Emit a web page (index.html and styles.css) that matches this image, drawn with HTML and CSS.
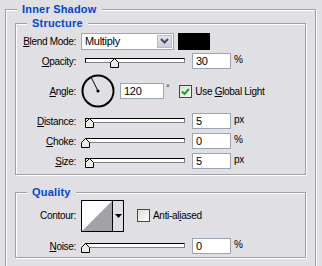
FILE: index.html
```html
<!DOCTYPE html>
<html lang="en">
<head>
    <meta charset="UTF-8">
    <title>Inner Shadow</title>
    <link rel="stylesheet" href="styles.css">
</head>
<body>
    <div class="group outer">
        <span class="group-title">Inner Shadow</span>

        <div class="group structure">
            <span class="group-title">Structure</span>

            <div class="row">
                <span class="label"><u>B</u>lend Mode:</span>
                <div class="select">
                    <span class="select-value">Multiply</span>
                    <span class="select-btn">
                        <svg width="11" height="8" viewBox="0 0 11 8"><path d="M2 2 L5.5 5.5 L9 2" fill="none" stroke="#3c4a6b" stroke-width="2"/></svg>
                    </span>
                </div>
                <div class="swatch"></div>
            </div>

            <div class="row">
                <span class="label"><u>O</u>pacity:</span>
                <div class="slider">
                    <div class="track"></div>
                    <svg class="thumb" style="left: 29px" width="9" height="10" viewBox="0 0 9 10"><path d="M4.5 0.5 L8.5 4.5 L8.5 9.5 L0.5 9.5 L0.5 4.5 Z" fill="#ecebe6" stroke="#000"/></svg>
                </div>
                <div class="field">30</div>
                <span class="unit">%</span>
            </div>

            <div class="row angle-row">
                <span class="label"><u>A</u>ngle:</span>
                <svg class="dial" width="34" height="34" viewBox="0 0 34 34">
                    <circle cx="17" cy="17" r="15.5" fill="none" stroke="#000" stroke-width="2"/>
                    <line x1="17" y1="17" x2="10.5" y2="4" stroke="#000" stroke-width="1"/>
                    <circle cx="17" cy="17" r="1.6" fill="#000"/>
                </svg>
                <div class="field field-wide">120</div>
                <span class="unit degree">°</span>
                <label class="check">
                    <span class="box">
                        <svg width="11" height="11" viewBox="0 0 11 11"><path d="M2 5.5 L4.5 8 L9 3" fill="none" stroke="#21a121" stroke-width="2"/></svg>
                    </span>
                    <span>Use <u>G</u>lobal Light</span>
                </label>
            </div>

            <div class="row">
                <span class="label"><u>D</u>istance:</span>
                <div class="slider">
                    <div class="track"></div>
                    <svg class="thumb" style="left: 4px" width="9" height="10" viewBox="0 0 9 10"><path d="M4.5 0.5 L8.5 4.5 L8.5 9.5 L0.5 9.5 L0.5 4.5 Z" fill="#ecebe6" stroke="#000"/></svg>
                </div>
                <div class="field">5</div>
                <span class="unit">px</span>
            </div>

            <div class="row">
                <span class="label"><u>C</u>hoke:</span>
                <div class="slider">
                    <div class="track"></div>
                    <svg class="thumb" style="left: 0px" width="9" height="10" viewBox="0 0 9 10"><path d="M4.5 0.5 L8.5 4.5 L8.5 9.5 L0.5 9.5 L0.5 4.5 Z" fill="#ecebe6" stroke="#000"/></svg>
                </div>
                <div class="field">0</div>
                <span class="unit">%</span>
            </div>

            <div class="row">
                <span class="label"><u>S</u>ize:</span>
                <div class="slider">
                    <div class="track"></div>
                    <svg class="thumb" style="left: 4px" width="9" height="10" viewBox="0 0 9 10"><path d="M4.5 0.5 L8.5 4.5 L8.5 9.5 L0.5 9.5 L0.5 4.5 Z" fill="#ecebe6" stroke="#000"/></svg>
                </div>
                <div class="field">5</div>
                <span class="unit">px</span>
            </div>
        </div>

        <div class="group quality">
            <span class="group-title">Quality</span>

            <div class="row contour-row">
                <span class="label">Contour:</span>
                <div class="contour">
                    <svg width="30" height="30" viewBox="0 0 30 30"><rect width="30" height="30" fill="#fff"/><path d="M0 30 L30 0 L30 30 Z" fill="#a3a2a6"/></svg>
                    <span class="contour-btn">
                        <svg width="7" height="4" viewBox="0 0 7 4"><path d="M0 0 L7 0 L3.5 4 Z" fill="#000"/></svg>
                    </span>
                </div>
                <label class="check anti">
                    <span class="box"></span>
                    <span>Anti-al<u>i</u>ased</span>
                </label>
            </div>

            <div class="row">
                <span class="label"><u>N</u>oise:</span>
                <div class="slider">
                    <div class="track"></div>
                    <svg class="thumb" style="left: 0px" width="9" height="10" viewBox="0 0 9 10"><path d="M4.5 0.5 L8.5 4.5 L8.5 9.5 L0.5 9.5 L0.5 4.5 Z" fill="#ecebe6" stroke="#000"/></svg>
                </div>
                <div class="field">0</div>
                <span class="unit">%</span>
            </div>
        </div>
    </div>
</body>
</html>
```

FILE: styles.css
```css
body {
    margin: 0;
    background: #e0dfe3;
    font-family: "Liberation Sans", Arial, sans-serif;
    font-size: 10px;
    letter-spacing: -0.3px;
    color: #000;
    overflow: hidden;
}
u {
    text-decoration: underline;
    text-underline-offset: 1px;
}
.group {
    position: relative;
    border: 1px solid #a0a0a4;
    box-shadow: 1px 1px 0 #fff, inset 1px 1px 0 #fff;
}
.group-title {
    position: absolute;
    top: -7px;
    left: 11px;
    padding: 0 5px;
    background: #e0dfe3;
    color: #0046d5;
    font-size: 11px;
    font-weight: bold;
    letter-spacing: 0.2px;
    line-height: 13px;
}
.outer {
    margin: 9px 0 0 5px;
    width: 291px;
    height: 262px;
    padding: 13px 9px 0 9px;
}
.structure {
    padding: 7px 0 3px 0;
}
.quality {
    margin-top: 17px;
    padding: 6px 0 1px 0;
}
.row {
    display: flex;
    align-items: center;
    height: 20px;
}
.label {
    width: 60px;
    margin-right: 5px;
    text-align: right;
    white-space: nowrap;
}
.select {
    display: flex;
    width: 91px;
    height: 15px;
    border: 1px solid #9aa5b3;
    background: #fff;
}
.select-value {
    flex: 1;
    padding-left: 3px;
    font-size: 11px;
    line-height: 15px;
}
.select-btn {
    display: flex;
    align-items: center;
    justify-content: center;
    width: 15px;
    margin: 1px;
    background: linear-gradient(#e4e6ee, #c9ccda);
    border: 1px solid #b4bccd;
    box-sizing: border-box;
}
.swatch {
    width: 32px;
    height: 17px;
    margin-left: 4px;
    background: #000;
}
.slider {
    position: relative;
    width: 107px;
    height: 10px;
    margin-top: 4px;
    margin-right: 4px;
}
.track {
    position: absolute;
    left: 4px;
    top: 0;
    width: 98px;
    height: 3px;
    background: #fff;
    border: 1px solid #000;
    border-right-color: #808080;
    border-bottom-color: #808080;
}
.thumb {
    position: absolute;
    top: 0;
}
.field {
    width: 34px;
    height: 14px;
    padding-left: 3px;
    border: 1px solid #9aa5b3;
    background: #fff;
    font-size: 11px;
    line-height: 14px;
}
.field-wide {
    width: 39px;
}
.unit {
    margin-left: 3px;
    align-self: flex-start;
    margin-top: 3px;
}
.degree {
    margin-left: 2px;
    margin-top: 12px;
    font-size: 9px;
}
.angle-row {
    height: 40px;
}
.dial {
    margin-right: 5px;
}
.check {
    display: flex;
    align-items: center;
    margin-left: 10px;
}
.box {
    display: flex;
    align-items: center;
    justify-content: center;
    width: 11px;
    height: 11px;
    margin-right: 3px;
    border: 1px solid #1c5180;
    background: linear-gradient(135deg, #dcdcd6, #fff);
}
.contour-row {
    height: 33px;
    margin-bottom: 4px;
}
.contour {
    display: flex;
    border: 1px solid #000;
}
.contour svg {
    display: block;
}
.contour-btn {
    display: flex;
    align-items: center;
    justify-content: center;
    width: 10px;
    border-left: 1px solid #000;
}
.anti {
    margin-left: 13px;
}
```
